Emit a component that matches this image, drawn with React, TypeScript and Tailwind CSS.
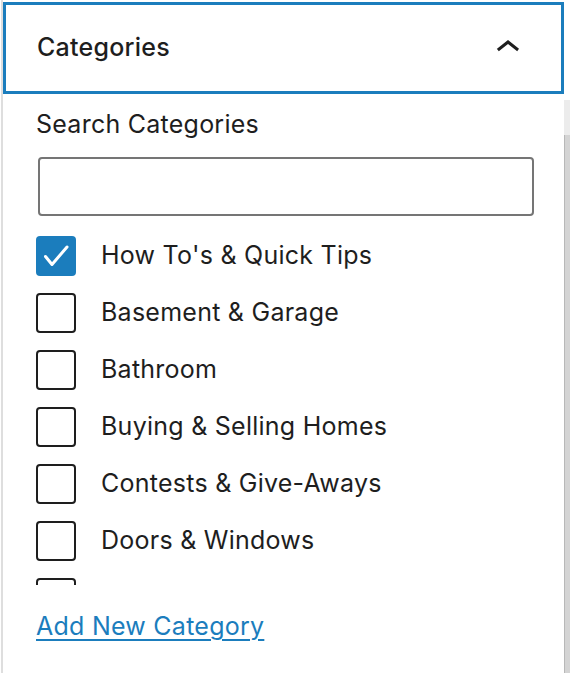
import { useState } from 'react';

const categories = [
  "How To's & Quick Tips",
  'Basement & Garage',
  'Bathroom',
  'Buying & Selling Homes',
  'Contests & Give-Aways',
  'Doors & Windows',
  'Electrical',
];

function ChevronUp() {
  return (
    <svg width="48" height="48" viewBox="0 0 24 24" className="fill-[#1e1e1e]">
      <path d="M6.5 12.4L12 8l5.5 4.4-.9 1.2L12 10l-4.6 3.6-1-1.2z" />
    </svg>
  );
}

function Checkbox({ checked }: { checked: boolean }) {
  if (checked) {
    return (
      <span className="flex h-[40px] w-[40px] shrink-0 rounded-[4px] bg-[#1b7dbd]">
        <svg width="40" height="40" viewBox="0 0 40 40" fill="none">
          <path d="M9.5 20.5l6.5 8L31 11" stroke="white" strokeWidth="3" strokeLinecap="round" strokeLinejoin="round" />
        </svg>
      </span>
    );
  }
  return <span className="h-[40px] w-[40px] shrink-0 rounded-[4px] border-2 border-[#1e1e1e] bg-white" />;
}

export default function App() {
  const [checked] = useState<string[]>(["How To's & Quick Tips"]);

  return (
    <div className="flex h-[673px] w-[570px] overflow-hidden bg-white font-['Inter',sans-serif] text-[#1e1e1e]">
      {/* sidebar panel */}
      <div className="ml-px flex w-[563px] flex-col border-l-2 border-[#dedede]">
        <button className="mt-[2px] flex h-[92px] items-center justify-between border-[3px] border-[#1b7dbd] pl-[31px] pr-[29px] text-left">
          <span className="text-[25px] font-medium tracking-[0.01em]">Categories</span>
          <ChevronUp />
        </button>

        <div className="flex flex-col pl-[33px] pr-[27px]">
          <label className="mt-[14px] h-[32px] text-[25px] leading-[32px] tracking-[0.01em]">Search Categories</label>
          <input
            type="text"
            className="ml-[2px] mt-[17px] h-[59px] w-[496px] rounded-[4px] border-2 border-[#757575] bg-white"
          />

          <div className="mt-[11px] h-[358px] overflow-hidden">
            {categories.map(name => (
              <div key={name} className="flex h-[57px] items-center gap-[25px]">
                <Checkbox checked={checked.includes(name)} />
                <span className="text-[25px] tracking-[0.01em]">{name}</span>
              </div>
            ))}
          </div>

          <a href="#" className="mt-[25px] h-[32px] text-[25px] leading-[32px] tracking-[0.01em] text-[#1b7dbd] underline decoration-2 underline-offset-[4px]">
            Add New Category
          </a>
        </div>
      </div>

      {/* edge of the editor behind */}
      <div className="flex flex-1 flex-col">
        <div className="h-[100px] bg-white" />
        <div className="h-[35px] bg-[#ececec]" />
        <div className="flex-1 border-l border-[#b8b8b8] bg-[#d4d4d4]" />
      </div>
    </div>
  );
}
